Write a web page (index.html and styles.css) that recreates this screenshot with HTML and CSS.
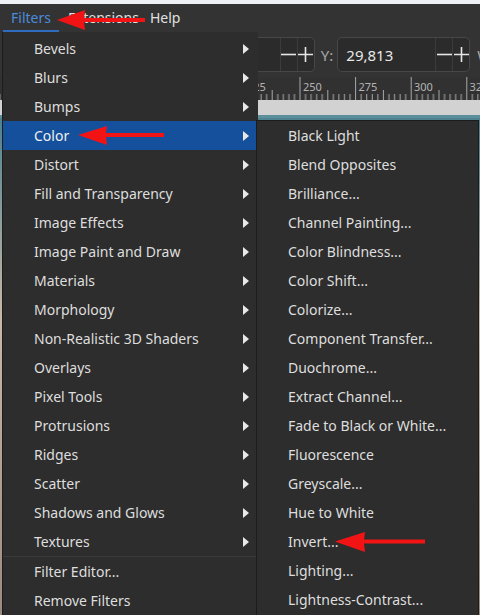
FILE: index.html
```html
<!DOCTYPE html>
<html lang="en">
<head>
  <meta charset="UTF-8">
  <title>Filters menu</title>
  <link rel="stylesheet" href="styles.css">
</head>
<body>
<div class="topstrip"></div>
<div class="menubar">
  <span class="menubar-item active">Filters</span>
  <span class="menubar-item">Extensions</span>
  <span class="menubar-item">Help</span>
</div>
<div class="toolbar">
  <span class="label">X:</span>
  <div class="field field-x">
    <span class="value"></span>
    <span class="step"><svg width="15" height="15" viewBox="0 0 15 15"><path d="M0 7.5h15" stroke="#e6e6e6" stroke-width="1.6"/></svg></span>
    <span class="step"><svg width="15" height="15" viewBox="0 0 15 15"><path d="M0 7.5h15M7.5 0v15" stroke="#e6e6e6" stroke-width="1.6"/></svg></span>
  </div>
  <span class="label">Y:</span>
  <div class="field field-y">
    <span class="value">29,813</span>
    <span class="step"><svg width="15" height="15" viewBox="0 0 15 15"><path d="M0 7.5h15" stroke="#e6e6e6" stroke-width="1.6"/></svg></span>
    <span class="step"><svg width="15" height="15" viewBox="0 0 15 15"><path d="M0 7.5h15M7.5 0v15" stroke="#e6e6e6" stroke-width="1.6"/></svg></span>
  </div>
  <span class="label label-w">W:</span>
</div>
<div class="ruler">
  <svg width="480" height="23" viewBox="0 0 480 23">
    <defs>
      <pattern id="ticks" x="21.5" y="0" width="55.6" height="23" patternUnits="userSpaceOnUse">
        <path d="M0.5 0v23M6.06 17v6M11.62 17v6M17.18 17v6M22.74 17v6M28.3 13v10M33.86 17v6M39.42 17v6M44.98 17v6M50.54 17v6" stroke="#a8a8a8" stroke-width="1"/>
      </pattern>
    </defs>
    <rect width="480" height="23" fill="url(#ticks)"/>
    <text x="247" y="14">225</text>
    <text x="303" y="14">250</text>
    <text x="358.5" y="14">275</text>
    <text x="414" y="14">300</text>
    <text x="469.5" y="14">325</text>
  </svg>
</div>
<div class="band"></div>
<div class="canvas"></div>

<div class="menu main-menu">
  <div class="item">Bevels<span class="arrow"></span></div>
  <div class="item">Blurs<span class="arrow"></span></div>
  <div class="item">Bumps<span class="arrow"></span></div>
  <div class="item hover">Color<span class="arrow"></span></div>
  <div class="item">Distort<span class="arrow"></span></div>
  <div class="item">Fill and Transparency<span class="arrow"></span></div>
  <div class="item">Image Effects<span class="arrow"></span></div>
  <div class="item">Image Paint and Draw<span class="arrow"></span></div>
  <div class="item">Materials<span class="arrow"></span></div>
  <div class="item">Morphology<span class="arrow"></span></div>
  <div class="item">Non-Realistic 3D Shaders<span class="arrow"></span></div>
  <div class="item">Overlays<span class="arrow"></span></div>
  <div class="item">Pixel Tools<span class="arrow"></span></div>
  <div class="item">Protrusions<span class="arrow"></span></div>
  <div class="item">Ridges<span class="arrow"></span></div>
  <div class="item">Scatter<span class="arrow"></span></div>
  <div class="item">Shadows and Glows<span class="arrow"></span></div>
  <div class="item">Textures<span class="arrow"></span></div>
  <div class="separator"></div>
  <div class="item">Filter Editor...</div>
  <div class="item">Remove Filters</div>
</div>

<div class="menu sub-menu">
  <div class="item">Black Light</div>
  <div class="item">Blend Opposites</div>
  <div class="item">Brilliance...</div>
  <div class="item">Channel Painting...</div>
  <div class="item">Color Blindness...</div>
  <div class="item">Color Shift...</div>
  <div class="item">Colorize...</div>
  <div class="item">Component Transfer...</div>
  <div class="item">Duochrome...</div>
  <div class="item">Extract Channel...</div>
  <div class="item">Fade to Black or White...</div>
  <div class="item">Fluorescence</div>
  <div class="item">Greyscale...</div>
  <div class="item">Hue to White</div>
  <div class="item">Invert...</div>
  <div class="item">Lighting...</div>
  <div class="item">Lightness-Contrast...</div>
</div>

<svg class="annotations" width="480" height="615" viewBox="0 0 480 615">
  <path d="M57 20 L85 10 L84 18 L145 18 L145 22 L84 22 L85 30 Z" fill="#f21414"/>
  <path d="M78 135 L107 126 L106 133 L164 133 L164 137 L106 137 L107 145 Z" fill="#f21414"/>
  <path d="M335 541.5 L365 532 L364 539.5 L425 539.5 L425 543.5 L364 543.5 L365 552 Z" fill="#f21414"/>
</svg>
</body>
</html>
```

FILE: styles.css
```css
body {
  margin: 0;
  width: 480px;
  height: 615px;
  overflow: hidden;
  position: relative;
  background: #2d2d2d;
  font-family: 'Noto Sans', 'Open Sans', sans-serif;
  font-size: 14px;
  color: #dedede;
}
.topstrip {
  height: 4px;
  background: #eef2f7;
}
.menubar {
  height: 28px;
  background: #333333;
  display: flex;
  align-items: center;
  padding-left: 3px;
}
.menubar-item {
  height: 28px;
  line-height: 28px;
  padding: 0 8px;
  font-size: 14px;
  color: #e0e0e0;
  box-sizing: border-box;
}
.menubar-item.active {
  color: #4b8bdc;
  border-bottom: 2px solid #2f6cc0;
  width: 56px;
}
.menubar-item + .menubar-item {
  padding-left: 9px;
  padding-right: 2px;
}
.toolbar {
  height: 45px;
  background: #333333;
  display: flex;
  align-items: center;
  padding-left: 162px;
  gap: 6px;
  overflow: hidden;
}
.toolbar > * {
  flex-shrink: 0;
}
.label {
  color: #a8a8a8;
  font-size: 15px;
}
.label-w {
  margin-left: 1px;
}
.field {
  height: 35px;
  box-sizing: border-box;
  border: 1px solid #474747;
  border-radius: 5px;
  background: #2b2b2b;
  display: flex;
  align-items: stretch;
}
.field-x {
  width: 134px;
}
.field-y {
  width: 133px;
  margin-left: -2px;
}
.value {
  flex: 1;
  display: flex;
  align-items: center;
  padding-left: 8px;
  font-size: 15px;
  color: #e8e8e8;
}
.step {
  width: 16px;
  display: flex;
  align-items: center;
  justify-content: center;
  border-left: 1px solid #3c3c3c;
}
.ruler {
  height: 23px;
  background: #313131;
}
.ruler svg {
  display: block;
}
.ruler text {
  font-family: 'Noto Sans', sans-serif;
  font-size: 11px;
  fill: #b4b4b4;
}
.band {
  height: 15px;
  background: #d2d2d2;
  border-bottom: 3px solid #5b8f9c;
}
.canvas {
  height: 500px;
  background: linear-gradient(#4e8290, #c8b8a8 40%, #9a8a80);
}
.menu {
  position: absolute;
  background: #2d2d2d;
  box-sizing: border-box;
  border: 1px solid #1c1c1c;
}
.main-menu {
  left: 2px;
  top: 32px;
  width: 256px;
  padding-top: 2px;
  border-top: none;
  border-right: none;
}
.sub-menu {
  left: 256px;
  top: 120px;
  width: 223px;
  height: 500px;
}
.item {
  height: 29px;
  display: flex;
  align-items: center;
  padding-left: 31px;
  white-space: nowrap;
}
.item.hover {
  background: #15509c;
  color: #f0f0f0;
}
.arrow {
  margin-left: auto;
  margin-right: 9px;
  width: 0;
  height: 0;
  border-top: 5px solid transparent;
  border-bottom: 5px solid transparent;
  border-left: 6px solid #e8e8e8;
}
.separator {
  height: 1px;
  background: #3a3a3a;
}
.annotations {
  position: absolute;
  left: 0;
  top: 0;
  pointer-events: none;
}
```
